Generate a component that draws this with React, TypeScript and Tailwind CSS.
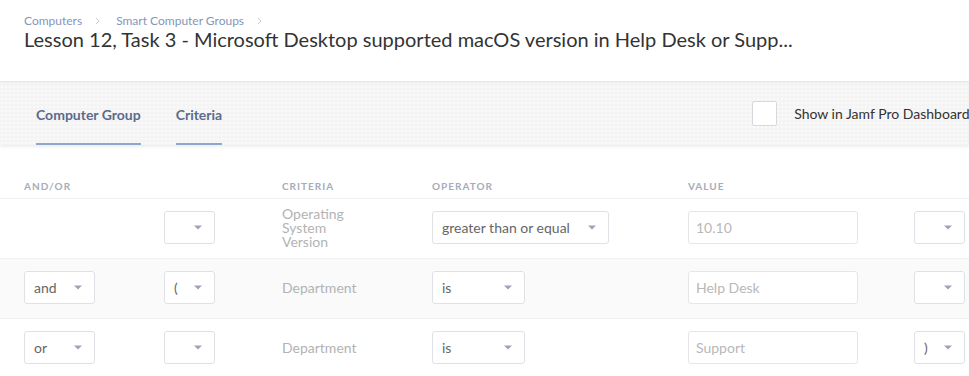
import type { ReactNode } from 'react'

const font = { fontFamily: 'Lato, "Open Sans", Arial, sans-serif' }

function Caret() {
  return (
    <svg width="8" height="5" viewBox="0 0 8 5" className="shrink-0">
      <path d="M0 0.5h8L4 4.5z" fill="#9ba4b6" />
    </svg>
  )
}

function Chevron() {
  return (
    <svg width="5" height="8" viewBox="0 0 5 8" className="ml-[13px] mr-[16px] shrink-0">
      <path d="M1 1l3 3-3 3" fill="none" stroke="#c5c9d1" strokeWidth="1" />
    </svg>
  )
}

function Select({ value, width }: { value?: string; width: string }) {
  return (
    <div className={`${width} h-[33px] flex items-center justify-between pl-[9px] pr-[12px] bg-white border border-[#dfe1e7] rounded-[3px] text-[14px] text-[#666]`}>
      <span>{value}</span>
      <Caret />
    </div>
  )
}

function ValueInput({ value }: { value: string }) {
  return (
    <div className="w-[170px] h-[33px] flex items-center pl-[7px] bg-white border border-[#e6e6e9] rounded-[3px] text-[14px] text-[#b8b8b8]">
      {value}
    </div>
  )
}

function Row({ children, shaded }: { children: ReactNode; shaded?: boolean }) {
  return (
    <div className={`grid grid-cols-[140px_118px_150px_256px_226px_55px] items-center h-[60px] px-6 pb-[2px] border-b border-[#f0f0f2] ${shaded ? 'bg-[#fafafa]' : 'bg-white'}`}>
      {children}
    </div>
  )
}

export default function App() {
  return (
    <div className="w-[969px] h-[376px] overflow-hidden bg-white" style={font}>
      {/* header */}
      <div className="h-[81px] px-6 pt-[14px] bg-white relative z-10 shadow-[0_1px_3px_rgba(0,0,0,0.08)]">
        <div className="flex items-center text-[12px] leading-[14px] text-[#8396bb]">
          <span>Computers</span>
          <Chevron />
          <span>Smart Computer Groups</span>
          <Chevron />
        </div>
        <div className="text-[20px] leading-[22px] text-[#333] whitespace-nowrap">
          Lesson 12, Task 3 - Microsoft Desktop supported macOS version in Help Desk or Supp...
        </div>
      </div>

      {/* tab bar */}
      <div className="h-[64px] flex items-stretch pl-9 bg-[#f4f4f4] bg-[radial-gradient(#fafafa_0.8px,transparent_1.2px)] bg-[length:4px_4px] relative shadow-[0_2px_3px_rgba(0,0,0,0.07)]">
        <div className="flex gap-[35px] whitespace-nowrap">
          <div className="flex items-center pt-[4px] border-b-2 border-[#8ea6cf] text-[14px] font-bold text-[#5b6b8c]">Computer Group</div>
          <div className="flex items-center pt-[4px] border-b-2 border-[#8ea6cf] text-[14px] font-bold text-[#5b6b8c]">Criteria</div>
        </div>
        <div className="ml-[530px] flex items-center gap-[17px] whitespace-nowrap">
          <div className="w-[25px] h-[25px] shrink-0 bg-white border border-[#d6d8de] rounded-[2px]" />
          <span className="text-[14px] text-[#333]">Show in Jamf Pro Dashboard</span>
        </div>
      </div>

      {/* criteria table */}
      <div className="grid grid-cols-[140px_118px_150px_256px_226px_55px] items-end h-[54px] px-6 pb-[4px] border-b border-[#eeeff2] text-[10px] font-bold tracking-[1px] text-[#a6acb9]">
        <div>AND/OR</div>
        <div />
        <div>CRITERIA</div>
        <div>OPERATOR</div>
        <div>VALUE</div>
        <div />
      </div>

      <Row>
        <div />
        <Select width="w-[51px]" />
        <div className="text-[14px] leading-[14px] text-[#b3b3b3]">
          Operating
          <br />
          System
          <br />
          Version
        </div>
        <Select width="w-[177px]" value="greater than or equal" />
        <ValueInput value="10.10" />
        <Select width="w-[51px]" />
      </Row>
      <Row shaded>
        <Select width="w-[71px]" value="and" />
        <Select width="w-[51px]" value="(" />
        <div className="text-[14px] text-[#b3b3b3]">Department</div>
        <Select width="w-[93px]" value="is" />
        <ValueInput value="Help Desk" />
        <Select width="w-[51px]" />
      </Row>
      <Row>
        <Select width="w-[71px]" value="or" />
        <Select width="w-[51px]" />
        <div className="text-[14px] text-[#b3b3b3]">Department</div>
        <Select width="w-[93px]" value="is" />
        <ValueInput value="Support" />
        <Select width="w-[51px]" value=")" />
      </Row>
    </div>
  )
}
